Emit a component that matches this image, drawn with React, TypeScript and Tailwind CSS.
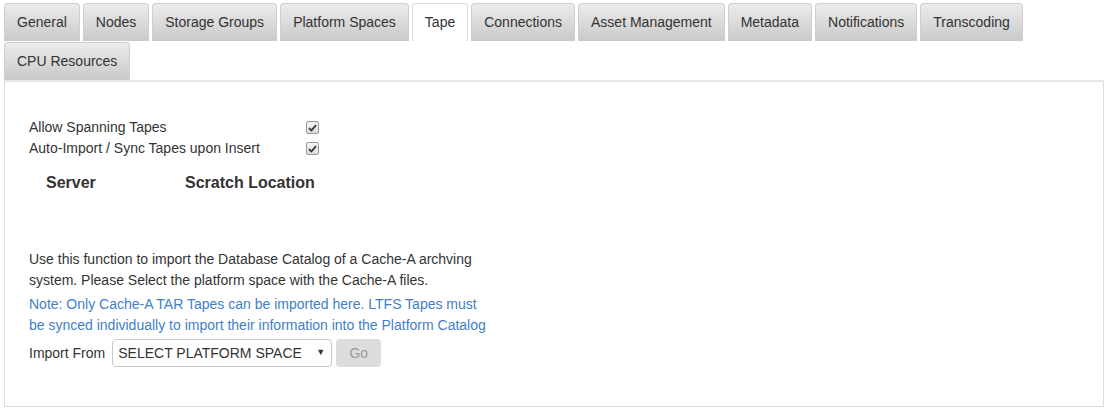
import React from "react";

const tabs = [
  "General",
  "Nodes",
  "Storage Groups",
  "Platform Spaces",
  "Tape",
  "Connections",
  "Asset Management",
  "Metadata",
  "Notifications",
  "Transcoding",
  "CPU Resources",
];

function CheckBox() {
  return (
    <span className="flex h-[13px] w-[13px] items-center justify-center rounded-[2px] border border-[#9a9a9a] bg-gradient-to-b from-[#f4f4f4] to-[#dcdcdc]">
      <svg width="9" height="8" viewBox="0 0 9 8">
        <path d="M1 4.2 L3.4 6.5 L8 1.2" fill="none" stroke="#333" strokeWidth="1.8" />
      </svg>
    </span>
  );
}

function SettingRow({ label }: { label: string }) {
  return (
    <div className="flex h-[21px] items-center">
      <span className="w-[277px]">{label}</span>
      <CheckBox />
    </div>
  );
}

export default function App() {
  return (
    <div className="min-h-[411px] bg-white pt-[3px] font-['Liberation_Sans',Arial,sans-serif] text-[14px] text-[#333]">
      <div className="ml-[4px] flex w-[1100px] flex-wrap gap-x-[3px] gap-y-[1px]">
        {tabs.map((t) => (
          <div
            key={t}
            className={
              t === "Tape"
                ? "flex h-[38px] items-center rounded-t-[4px] border border-b-0 border-[#ddd] bg-white px-[12px]"
                : "flex h-[38px] items-center rounded-t-[4px] border border-b-0 border-[#cfcfcf] bg-gradient-to-b from-[#ececec] to-[#c9c9c9] px-[12px]"
            }
          >
            {t}
          </div>
        ))}
      </div>

      <div className="ml-[4px] h-[327px] w-[1100px] border border-t-2 border-[#ddd] border-t-[#e6e6e6] px-[24px] pt-[35px]">
        <SettingRow label="Allow Spanning Tapes" />
        <SettingRow label="Auto-Import / Sync Tapes upon Insert" />

        <div className="mt-[12px] ml-[17px] flex h-[24px] items-center text-[16px] font-bold">
          <span className="w-[139px]">Server</span>
          <span>Scratch Location</span>
        </div>

        <p className="mt-[54px] w-[462px] leading-[21px]">
          Use this function to import the Database Catalog of a Cache-A archving system. Please Select the platform space with the Cache-A files.
        </p>
        <p className="mt-[3px] w-[462px] leading-[21px] text-[#3f80c9]">
          Note: Only Cache-A TAR Tapes can be imported here. LTFS Tapes must be synced individually to import their information into the Platform Catalog
        </p>

        <div className="mt-[3px] flex items-center">
          <span className="mr-[7px]">Import From</span>
          <div className="flex h-[28px] w-[220px] items-center justify-between rounded-[4px] border border-[#c8c8c8] bg-white pr-[6px] pl-[5px]">
            <span>SELECT PLATFORM SPACE</span>
            <span className="text-[9px] text-[#333]">▼</span>
          </div>
          <button className="ml-[4px] h-[28px] w-[45px] rounded-[4px] bg-[#dddddd] text-[#999]">
            Go
          </button>
        </div>
      </div>
    </div>
  );
}
